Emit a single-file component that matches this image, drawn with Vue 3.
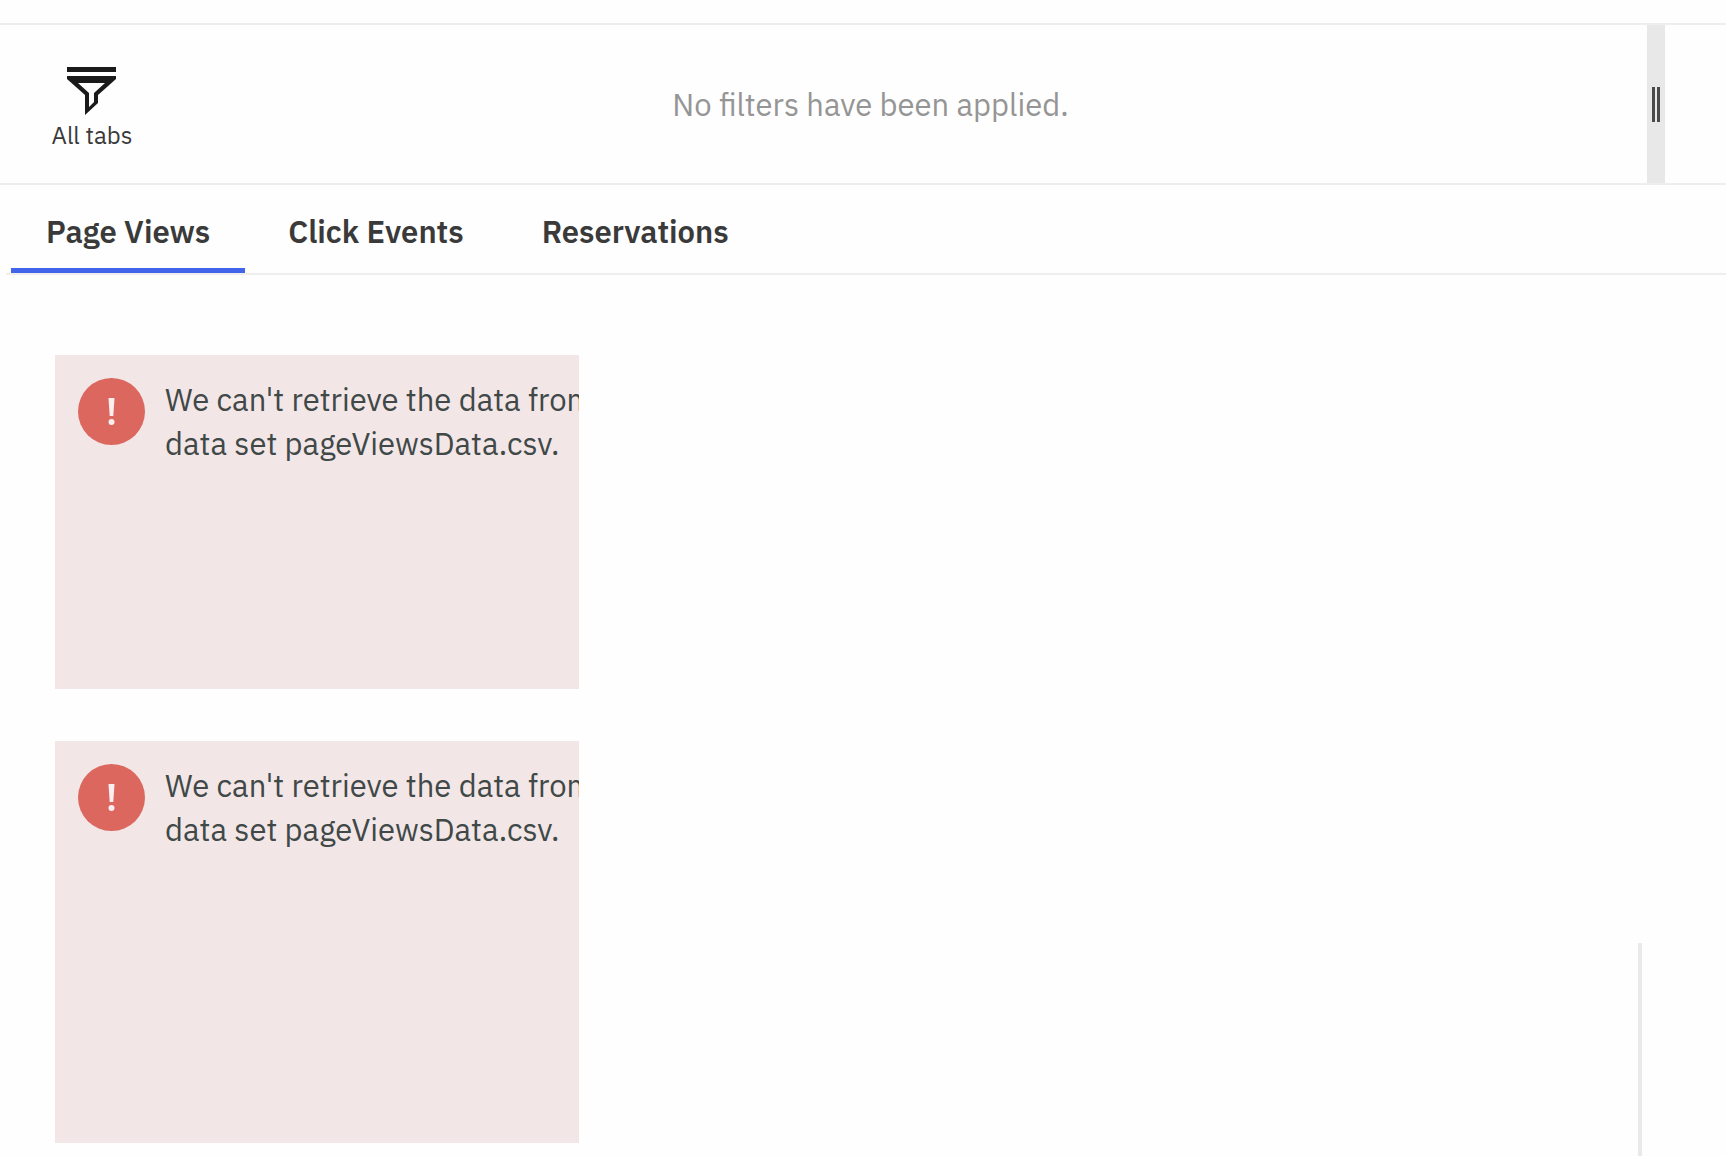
<script setup>
import { ref } from 'vue'

const tabs = ['Page Views', 'Click Events', 'Reservations']
const active = ref(0)

const cards = [
  { id: 'summary', size: 'short' },
  { id: 'detail', size: 'tall' },
]
</script>

<template>
  <div class="dashboard">
    <header class="filter-bar">
      <button type="button" class="all-tabs">
        <svg class="funnel" viewBox="0 0 50 50" aria-hidden="true">
          <path d="M0 0H49V5H0Z" />
          <path
            fill-rule="evenodd"
            d="M0 9H49V12L31 28V36L18 48V28L0 12ZM11 16L22 26V40L27 35V26L38 16Z"
          />
        </svg>
        <span>All tabs</span>
      </button>
      <p class="message">No filters have been applied.</p>
      <div class="splitter" role="separator" aria-orientation="vertical">
        <i></i><i></i>
      </div>
      <div class="filter-side"></div>
    </header>

    <nav class="tabs" role="tablist">
      <button
        v-for="(tab, i) in tabs"
        :key="tab"
        type="button"
        role="tab"
        class="tab"
        :class="{ active: i === active }"
        :aria-selected="i === active"
        @click="active = i"
      >
        {{ tab }}
      </button>
    </nav>

    <main class="canvas">
      <div class="cards">
        <section v-for="card in cards" :key="card.id" class="card" :class="card.size">
          <svg class="alert" viewBox="0 0 67 67" aria-hidden="true">
            <circle cx="33.5" cy="33.5" r="33.5" fill="#dc675e" />
            <path d="M30.5 20H36.5L35.3 38H31.7Z" fill="#fbeeee" />
            <circle cx="33.5" cy="44" r="3" fill="#fbeeee" />
          </svg>
          <p class="error">We can't retrieve the data from<br />data set pageViewsData.csv.</p>
        </section>
      </div>
      <aside class="panel"></aside>
    </main>
  </div>
</template>

<style>
body {
  margin: 0;
  background: #fefefe;
}
</style>

<style scoped>
.dashboard {
  box-sizing: border-box;
  min-height: 100vh;
  padding-top: 23px;
  display: flex;
  flex-direction: column;
  background: #fefefe;
  color: #3a3a3a;
  font-family: "IBM Plex Sans", Roboto, sans-serif;
  font-size: 31px;
  line-height: 44px;
}

button {
  border: 0;
  padding: 0;
  background: none;
  color: inherit;
  font: inherit;
  cursor: pointer;
}

p {
  margin: 0;
}

.filter-bar {
  display: flex;
  min-height: 158px;
  border-top: 2px solid #eeeeee;
  border-bottom: 2px solid #eeeeee;
}

.all-tabs {
  width: 92px;
  margin-left: 46px;
  padding-top: 10px;
  display: flex;
  flex-direction: column;
  align-items: center;
  justify-content: center;
  gap: 2px;
  font-size: 24px;
  line-height: 32px;
  white-space: nowrap;
}

.funnel {
  width: 50px;
  height: 50px;
  fill: #1a1a1a;
}

.message {
  flex: 1;
  align-self: center;
  padding: 2px 44px 0 0;
  color: #959595;
  text-align: center;
}

.splitter {
  width: 18px;
  display: flex;
  align-items: center;
  justify-content: center;
  gap: 2px;
  background: #e8e8e8;
}

.splitter i {
  width: 3px;
  height: 35px;
  background: #4a4a4a;
}

.filter-side {
  width: 61px;
}

.tabs {
  display: flex;
  gap: 8px;
  margin-left: 6px;
  padding-left: 5px;
  border-bottom: 2px solid #eeeeee;
}

.tab {
  padding: 25px 35px 14px;
  border-bottom: 5px solid transparent;
  font-weight: 600;
}

.tab.active {
  border-bottom-color: #4264ea;
}

.canvas {
  flex: 1;
  display: flex;
  justify-content: space-between;
}

.cards {
  width: 524px;
  padding: 80px 0 12px 55px;
  display: flex;
  flex-direction: column;
  gap: 52px;
}

.card {
  box-sizing: border-box;
  padding: 23px 0 23px 23px;
  display: flex;
  align-items: flex-start;
  gap: 20px;
  overflow: hidden;
  background: #f2e6e6;
  color: #404848;
}

.card.short {
  min-height: 334px;
}

.card.tall {
  min-height: 402px;
}

.alert {
  flex: none;
  width: 67px;
  height: 67px;
}

.error {
  white-space: nowrap;
}

.panel {
  box-sizing: border-box;
  width: 88px;
  height: 213px;
  align-self: flex-end;
  border-left: 4px solid #e9e9e9;
}
</style>
